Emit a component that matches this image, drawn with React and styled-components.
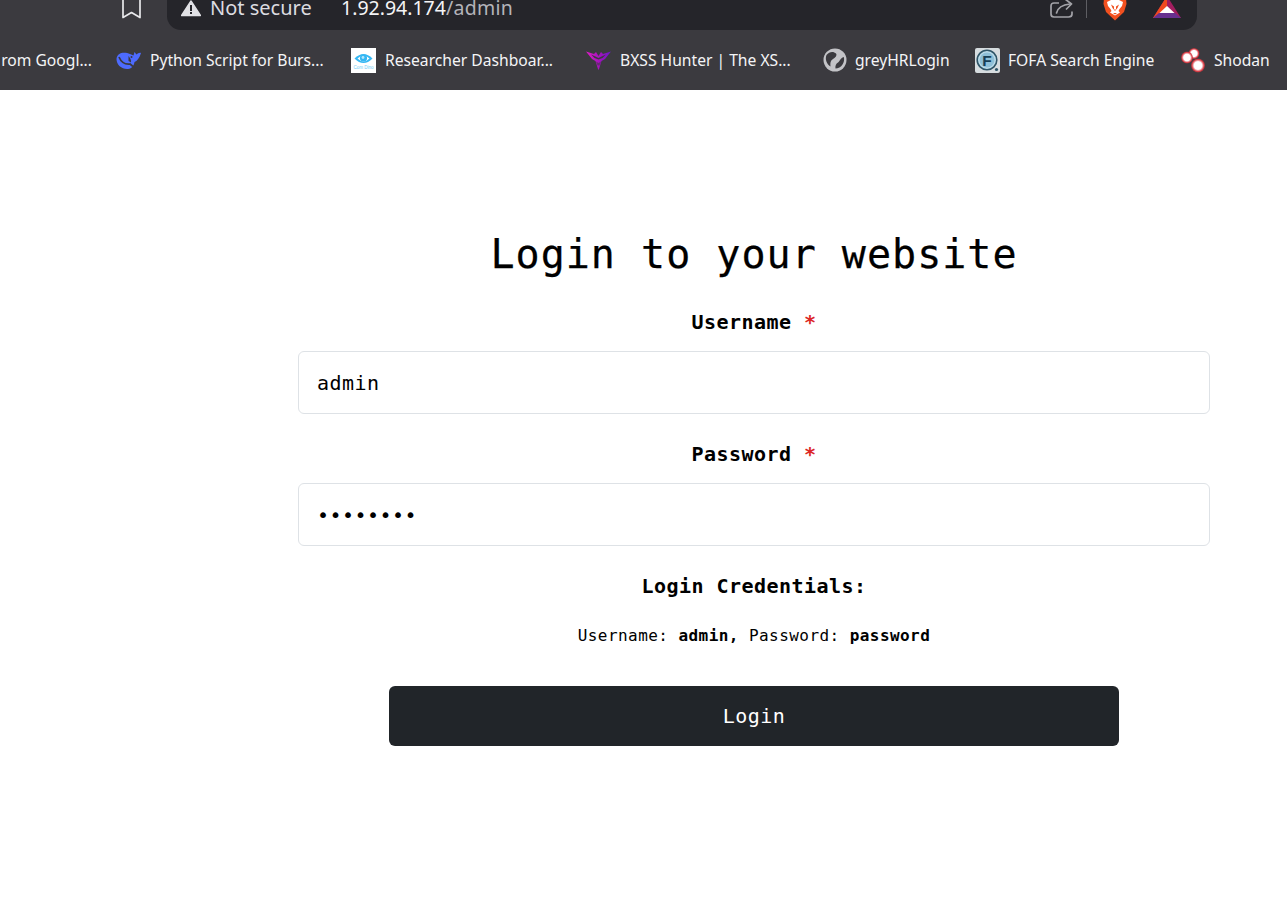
import React from "react";
import styled, { createGlobalStyle } from "styled-components";

const Global = createGlobalStyle`
  html, body { margin: 0; padding: 0; background: #fff; }
  body { font-family: "DejaVu Sans Mono", "Liberation Mono", monospace; color: #000; overflow: hidden; }
`;

const Page = styled.div`width: 1287px; height: 902px; overflow: hidden; background: #fff;`;

const Chrome = styled.header`
  height: 90px;
  background: #3b3a3f;
  font-family: "Noto Sans", "Open Sans", sans-serif;
  color: #f1f1f3;
`;

const TopRow = styled.div`
  height: 30px;
  display: flex;
  align-items: flex-end;
  overflow: hidden;
`;

const SaveSlot = styled.div`
  width: 167px;
  height: 30px;
  padding-left: 121px;
  box-sizing: border-box;
  flex: none;
`;

const AddressBar = styled.div`
  width: 1030px;
  height: 30px;
  flex: none;
  box-sizing: border-box;
  padding: 0 16px 0 14px;
  background: #25252a;
  border-radius: 0 0 14px 14px;
  display: flex;
  align-items: flex-start;
  font-size: 19.5px;
  line-height: 16px;
`;

const Warn = styled.span`display: block; width: 20px; height: 18px; margin-right: 9px; flex: none;`;
const NotSecure = styled.span`color: #dcdce0; font-size: 20px; white-space: nowrap; width: 132px; flex: none;`;
const Host = styled.span`color: #f4f4f6; white-space: nowrap; margin-left: -1px;`;
const Path = styled.span`color: #b4b4ba; white-space: nowrap; letter-spacing: 0.3px;`;
const BarEnd = styled.div`margin-left: auto; display: flex; align-items: flex-start; height: 20px;`;
const Divider = styled.span`width: 1px; height: 18px; background: #5e5e63; margin: 0 16px 0 13px;`;
const Shift = styled.div`margin-right: ${p => p.$mr || 0}px;`;

const Bookmarks = styled.nav`
  height: 60px;
  display: flex;
  align-items: center;
  overflow: hidden;
  font-size: 15.65px;
  white-space: nowrap;
`;

const Mark = styled.a`
  width: ${p => p.$w}px;
  flex: none;
  display: flex;
  align-items: center;
  gap: ${p => p.$gap ?? 9}px;
  color: #f4f4f6;
`;

const Clip = styled.span`display: block; width: 92px; text-align: right; margin-right: 24px; flex: none; color: #f4f4f6;`;

const Fav = styled.span`
  width: 25px; height: 25px; flex: none; display: flex; align-items: center; justify-content: center;
  background: ${p => p.$bg || "transparent"};
`;

const Main = styled.main`
  width: 912px;
  margin-left: 298px;
  padding-top: 135px;
  text-align: center;
`;

const Title = styled.h1`
  margin: 0 0 25px;
  font-size: 40px;
  font-weight: 400;
  line-height: 58px;
  letter-spacing: 1.02px;
  -webkit-text-stroke: 0.25px #000;
`;

const Field = styled.div`margin-bottom: 26px;`;

const Label = styled.label`
  display: block;
  font-size: 20px;
  line-height: 28px;
  font-weight: 700;
  letter-spacing: 0.46px;
  margin-bottom: 15px;
`;
const Req = styled.span`color: #dc2626;`;

const Input = styled.input`
  display: block;
  width: 100%;
  height: 63px;
  box-sizing: border-box;
  padding: 0 18px;
  border: 1px solid #dee2e6;
  border-radius: 6px;
  background: #fff;
  font-family: inherit;
  font-size: 20px;
  letter-spacing: 0.46px;
  color: #000;
  outline: none;
`;

const CredTitle = styled.h3`
  margin: 0 0 24px;
  font-size: 20px;
  line-height: 28px;
  font-weight: 700;
  letter-spacing: 0.46px;
`;

const CredText = styled.p`
  margin: 0 0 38px;
  font-size: 16px;
  line-height: 24px;
  letter-spacing: 0.44px;
  & b { font-weight: 700; }
`;

const Submit = styled.button`
  display: block;
  width: 730px;
  height: 60px;
  margin: 0 auto;
  border: 0;
  border-radius: 6px;
  background: #212529;
  color: #fff;
  font-family: inherit;
  font-size: 20px;
  letter-spacing: 0.46px;
`;

const BookmarkIcon = () => (
  <svg width="22" height="19" viewBox="0 0 22 19" fill="none" stroke="#e9e9ec" strokeWidth="1.7" style={{ display: "block" }}>
    <path d="M2 -2V17.500L10.500 12.500L19 17.500V-2" strokeLinejoin="round" />
  </svg>
);
const WarnIcon = () => (
  <svg width="20" height="18" viewBox="0 0 20 18">
    <path d="M10 1L19.500 15.500H.5Z" fill="#e1e1e5" stroke="#e1e1e5" strokeWidth="1.400" strokeLinejoin="round" />
    <path d="M9 5h2v6H9zM9 12h2v2H9z" fill="#25252a" />
  </svg>
);
const ShareIcon = () => (
  <svg width="23" height="19" viewBox="0 0 23 19" fill="none" stroke="#a3a3a8" strokeWidth="1.700" style={{ display: "block" }}>
    <path d="M9 3H4Q1 3 1 6V14Q1 17 4 17H18.500Q22 17 22 14V11.500" />
    <path d="M6.500 13Q8.500 5 20 4" strokeLinecap="round" />
    <path d="M15 -1L21.500 4L16 9.500" strokeLinejoin="round" />
  </svg>
);
const Brave = () => (
  <svg width="24" height="21" viewBox="0 0 24 21" style={{ display: "block" }}>
    <path d="M1 -2H23L23.500 4L21 12L12 20.500L3 12L.5 4Z" fill="#f1501f" />
    <path d="M4 2L8 0H16L20 2L19 6L16.500 9L15.500 11L17 12.500L12 15.500L7 12.500L8.500 11L7.500 9L5 6Z" fill="#fff" />
    <path d="M8 4.500L11 6.500V9.500H13V6.500L16 4.500L14.500 8L12 11L9.500 8Z" fill="#f1501f" />
    <path d="M10 13H14L12 14.500Z" fill="#f1501f" />
  </svg>
);
const Bat = () => (
  <svg width="28" height="19" viewBox="0 0 28 19" style={{ display: "block" }}>
    <path d="M14 -4L28 18H0Z" fill="#a21d5f" />
    <path d="M14 -4L0 18H6L14 6Z" fill="#f0491f" />
    <path d="M0 18L6 13H22L28 18Z" fill="#67308f" />
    <path d="M14 6L21.500 13H6.500Z" fill="#fff" />
  </svg>
);
const Whale = () => (
  <svg width="25" height="20" viewBox="0 0 25 20">
    <path d="M25 3C23 2.500 22 3.500 20.500 4.500L18.500 2L17.500 5.500L14 4C9 1.500 1 2 .5 9C.5 15 6 19.500 12 19C16 18.500 18 15.500 18.500 12C21 11 23.500 8 25 3Z" fill="#4d6bfe" />
    <path d="M3 7C5 12 9 14.500 14 14L17 16.500" fill="none" stroke="#3b3a3f" strokeWidth="1.700" />
    <path d="M12.500 6C14 8 15.500 10 15 12.500L12.500 11Z" fill="#3b3a3f" />
    <circle cx="15.500" cy="7" r="1" fill="#3b3a3f" />
  </svg>
);
const Eye = () => (
  <svg width="25" height="25" viewBox="0 0 25 25">
    <path d="M3.500 10.500Q12.500 1.500 21.500 10.500Q12.500 19.500 3.500 10.500Z" fill="#35b7f3" />
    <path d="M6.500 10.500Q12.500 4.500 18.500 10.500Q12.500 16.500 6.500 10.500Z" fill="#fff" />
    <circle cx="12.500" cy="10" r="3.600" fill="#35b7f3" />
    <circle cx="12" cy="9.500" r="1.400" fill="#b5e6fb" />
    <text x="12.500" y="21" textAnchor="middle" fontFamily="Liberation Sans, sans-serif" fontSize="4.500" fill="#6fcdf7">Com Dino</text>
  </svg>
);
const Moth = () => (
  <svg width="25" height="24" viewBox="0 0 25 24">
    <defs>
      <linearGradient id="mothG" x1="0" x2="1" y1="0" y2="0">
        <stop offset="0" stopColor="#e21bc9" />
        <stop offset=".55" stopColor="#a212bd" />
        <stop offset="1" stopColor="#6a17c9" />
      </linearGradient>
    </defs>
    <path d="M0 3.500L8 6L10 4L12.500 8L15 4L17 6L25 3.500L19 11L15.500 13L13 21L12.500 22L12 21L9.500 13L6 11ZM5 6.500L8.500 10L12.500 11.500L16.500 10L20 6.500L15.500 8.500L12.500 10L9.500 8.500Z" fill="url(#mothG)" fillRule="evenodd" />
    <path d="M10 13.500L12.500 15L15 13.500L13.500 17.500H11.500Z" fill="#3b3a3f" opacity=".6" />
  </svg>
);
const Globe = () => (
  <svg width="24" height="24" viewBox="0 0 24 24">
    <circle cx="12" cy="12" r="11.500" fill="#c3c3c7" />
    <path d="M3.500 7C6.500 3 11 3.500 13 5.500C14.500 7.500 12 10 10 11C7.500 12.500 7 15 7.500 18.500C3.500 16 1.800 11 3.500 7Z" fill="#3b3a3f" />
    <path d="M20.800 9C21.500 11.500 21 14.500 19.500 16.500C18 19 15 20.500 12.500 20.500C12 18 13 15.500 15 14.500C17 13.500 17 10 20.800 9Z" fill="#3b3a3f" />
  </svg>
);
const Fofa = () => (
  <svg width="25" height="25" viewBox="0 0 25 25">
    <rect width="25" height="25" rx="2" fill="#d6dcdf" />
    <circle cx="12" cy="12" r="9.800" fill="#bcdcea" stroke="#2f5568" strokeWidth="1.600" />
    <circle cx="12" cy="12" r="7.500" fill="#8fc0d8" />
    <text x="12" y="17.500" textAnchor="middle" fontFamily="Liberation Sans, sans-serif" fontWeight="700" fontSize="15.500" fill="#173f56">F</text>
    <circle cx="21.500" cy="21.500" r="1.600" fill="#2f5568" />
  </svg>
);
const ShodanIcon = () => (
  <svg width="25" height="25" viewBox="0 0 25 25">
    <defs>
      <radialGradient id="shodanG">
        <stop offset="0" stopColor="#fff" />
        <stop offset=".55" stopColor="#fff" />
        <stop offset=".85" stopColor="#dc3f48" />
        <stop offset="1" stopColor="#c2323a" stopOpacity=".6" />
      </radialGradient>
    </defs>
    <circle cx="13" cy="5.500" r="5.500" fill="url(#shodanG)" />
    <circle cx="6" cy="9.500" r="6" fill="url(#shodanG)" />
    <circle cx="17" cy="17.500" r="7" fill="url(#shodanG)" />
  </svg>
);

const marks = [
  { w: 235, icon: <Whale />, text: "Python Script for Burs..." },
  { w: 235, icon: <Eye />, bg: "#fff", text: "Researcher Dashboar..." },
  { w: 236, icon: <Moth />, gap: 9, text: "BXSS Hunter | The XS..." },
  { w: 153, icon: <Globe />, gap: 8, text: "greyHRLogin" },
  { w: 206, icon: <Fofa />, gap: 8, text: "FOFA Search Engine" },
  { w: 100, icon: <ShodanIcon />, gap: 8, text: "Shodan" },
];

export default function App() {
  return (
    <Page>
      <Global />
      <Chrome>
        <TopRow>
          <SaveSlot><BookmarkIcon /></SaveSlot>
          <AddressBar>
            <Warn><WarnIcon /></Warn>
            <NotSecure>Not secure</NotSecure>
            <Host>1.92.94.174</Host>
            <Path>/admin</Path>
            <BarEnd>
              <ShareIcon />
              <Divider />
              <Shift $mr={26}><Brave /></Shift>
              <Bat />
            </BarEnd>
          </AddressBar>
        </TopRow>
        <Bookmarks>
          <Clip>rom Googl...</Clip>
          {marks.map(m => (
            <Mark key={m.text} $w={m.w} $gap={m.gap}>
              <Fav $bg={m.bg}>{m.icon}</Fav>
              <span>{m.text}</span>
            </Mark>
          ))}
        </Bookmarks>
      </Chrome>
      <Main>
        <Title>Login to your website</Title>
        <Field>
          <Label>Username <Req>*</Req></Label>
          <Input type="text" defaultValue="admin" />
        </Field>
        <Field>
          <Label>Password <Req>*</Req></Label>
          <Input type="password" defaultValue="password" />
        </Field>
        <CredTitle>Login Credentials:</CredTitle>
        <CredText>Username: <b>admin,</b> Password: <b>password</b></CredText>
        <Submit type="button">Login</Submit>
      </Main>
    </Page>
  );
}
